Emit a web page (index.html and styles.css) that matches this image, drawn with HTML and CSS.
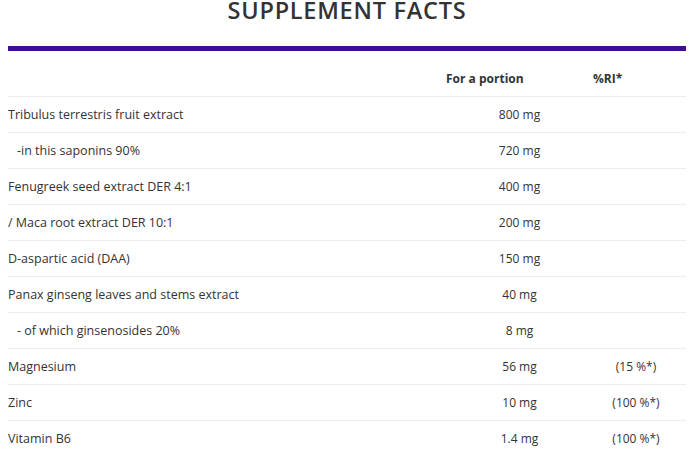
FILE: index.html
```html
<!DOCTYPE html>
<html lang="en">
<head>
<meta charset="utf-8">
<link rel="stylesheet" href="styles.css">
</head>
<body>
<div class="facts">
  <h2 class="title">SUPPLEMENT FACTS</h2>
  <div class="bar"></div>
  <div class="table">
    <div class="row head"><span></span><span class="hd">For a portion</span><span class="hd">%RI*</span></div>
    <div class="row"><span class="name">Tribulus terrestris fruit extract</span><span class="val">800 mg</span><span class="ri"></span></div>
    <div class="row"><span class="name indent">-in this saponins 90%</span><span class="val">720 mg</span><span class="ri"></span></div>
    <div class="row"><span class="name">Fenugreek seed extract DER 4:1</span><span class="val">400 mg</span><span class="ri"></span></div>
    <div class="row"><span class="name">/ Maca root extract DER 10:1</span><span class="val">200 mg</span><span class="ri"></span></div>
    <div class="row"><span class="name">D-aspartic acid (DAA)</span><span class="val">150 mg</span><span class="ri"></span></div>
    <div class="row"><span class="name">Panax ginseng leaves and stems extract</span><span class="val">40 mg</span><span class="ri"></span></div>
    <div class="row"><span class="name indent">- of which ginsenosides 20%</span><span class="val">8 mg</span><span class="ri"></span></div>
    <div class="row"><span class="name">Magnesium</span><span class="val">56 mg</span><span class="ri">(15 %*)</span></div>
    <div class="row"><span class="name">Zinc</span><span class="val">10 mg</span><span class="ri">(100 %*)</span></div>
    <div class="row"><span class="name">Vitamin B6</span><span class="val">1.4 mg</span><span class="ri">(100 %*)</span></div>
  </div>
</div>
</body>
</html>
```

FILE: styles.css
```css
html, body {
  margin: 0;
  padding: 0;
  background: #fff;
}
body {
  font-family: "Open Sans", "Liberation Sans", sans-serif;
  color: #333;
  font-size: 12px;
}
.facts {
  padding: 0 4px 0 8px;
}
.title {
  margin: 0;
  height: 46px;
  text-align: center;
  font-weight: 600;
  font-size: 23.5px;
  line-height: 20.5px;
  letter-spacing: 0.75px;
  color: #333;
}
.bar {
  height: 5px;
  background: #3f0f91;
}
.table {
  margin-top: 9px;
}
.row {
  display: grid;
  grid-template-columns: 438px 147px 86px;
  align-items: center;
  box-sizing: border-box;
  height: 36px;
  border-top: 1px solid #eee;
}
.row.head {
  border-top: none;
}
.name {
  font-size: 12.5px;
}
.hd {
  font-weight: 700;
}
.val, .ri {
  text-align: center;
}
.indent {
  padding-left: 9px;
}
```
